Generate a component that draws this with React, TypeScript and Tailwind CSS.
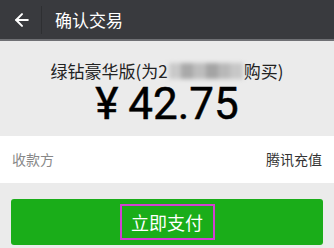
import { ArrowLeft } from 'lucide-react';

const CJK = '"Noto Sans CJK SC", "Noto Sans", sans-serif';

export default function App() {
  return (
    <main
      className="h-[248px] w-[334px] overflow-hidden bg-[#ebebeb]"
      style={{ fontFamily: CJK }}
    >
      <header className="flex h-[41px] items-center border-b-2 border-[#6f7074] bg-[#393a3e]">
        <div className="flex w-[41px] items-center justify-center">
          <ArrowLeft className="ml-[2px] h-[20px] w-[20px] text-white" strokeWidth={2.4} />
        </div>
        <div className="h-[28px] w-px bg-[#2e2f32]" />
        <h1 className="ml-[13px] text-[17px] leading-none text-white">确认交易</h1>
      </header>

      <section className="flex flex-col items-center pt-[20px]">
        <p className="flex items-center text-[17px] leading-[20px] text-[#222]">
          绿钻豪华版(为2
          <span className="mx-[1px] flex h-[16px] w-[74px] blur-[2px]">
            <span className="flex-1 bg-[#c9c9c9]" />
            <span className="flex-1 bg-[#a9a9a9]" />
            <span className="flex-1 bg-[#bdbdbd]" />
            <span className="flex-1 bg-[#a4a4a4]" />
            <span className="flex-1 bg-[#b8b8b8]" />
            <span className="flex-1 bg-[#c7c7c7]" />
          </span>
          购买)
        </p>
        <p
          className="mt-[1px] text-[44px] font-normal leading-[44px] text-black [-webkit-text-stroke:0.5px_black]"
          style={{ fontFamily: 'Roboto, "Noto Sans CJK SC", sans-serif' }}
        >
          <span className="mr-[10px]">¥</span>42.75
        </p>
      </section>

      <div className="mt-[10px] flex h-[47px] items-center justify-between bg-white px-[12px] text-[14px]">
        <span className="text-[#888]">收款方</span>
        <span className="text-[#333]">腾讯充值</span>
      </div>

      <div className="px-[11px] pt-[16px]">
        <button
          type="button"
          className="flex h-[46px] w-full items-center justify-center rounded-[3px] bg-[#1aad19]"
        >
          <span className="flex h-[36px] w-[95px] items-center justify-center border-2 border-[#d23fd2] text-[18px] text-white">
            立即支付
          </span>
        </button>
      </div>
    </main>
  );
}
